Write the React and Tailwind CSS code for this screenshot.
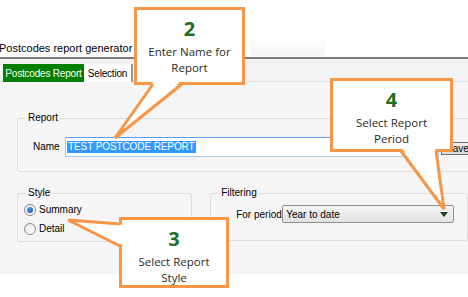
import React from 'react';

const ui = "font-['Liberation_Sans',Arial,sans-serif] text-[10px] text-black";
const callFont = "font-['Open_Sans',sans-serif]";

function Group({ label, className, children }) {
  return (
    <div className={`relative border border-[#dcdcdc] rounded-[3px] ${className}`}>
      <span className="absolute -top-[7px] left-[8px] px-[2px] bg-[#f5f5f5] leading-[12px]">{label}</span>
      {children}
    </div>
  );
}

function Radio({ checked, label }) {
  return (
    <div className="flex items-center h-[12px]">
      <span className="w-[12px] h-[12px] rounded-full border border-[#8c8c8c] bg-gradient-to-br from-[#e8e8e8] to-[#fdfdfd] flex items-center justify-center">
        {checked && <span className="w-[6px] h-[6px] rounded-full bg-gradient-to-br from-[#5fa3f0] to-[#1553b6]" />}
      </span>
      <span className="ml-[3px] leading-[12px]">{label}</span>
    </div>
  );
}

function Callout({ num, lines, className }) {
  return (
    <div className={`absolute border-[3px] border-[#f79646] bg-white flex flex-col items-center pt-[8px] ${callFont} ${className}`}>
      <span className="text-[20px] leading-[22px] font-bold text-[#1d6e1d]">{num}</span>
      <div className="mt-[4px] text-[11.5px] leading-[16px] text-[#2a2a2a] text-center">
        {lines.map((l) => <div key={l}>{l}</div>)}
      </div>
    </div>
  );
}

export default function App() {
  return (
    <div className={`relative w-[468px] h-[297px] overflow-hidden bg-white ${ui}`}>
      {/* title */}
      <div className="h-[57px] pt-[41px] flex">
        <span className="-ml-[1px] text-[11px] leading-[14px]">Postcodes report generator</span>
        <div className="ml-[118px] mt-[-1px] w-[75px] h-[16px] bg-gradient-to-b from-[#fdfdfd] to-[#f5f5f5]" />
      </div>
      <div className="h-[2px] bg-[#7b7b7b]" />

      {/* tabs */}
      <div className="h-[23px] bg-[#f2f2f2] pt-[5px] pl-[3px] flex border-b border-[#e6e6e6]">
        <div className="h-[18px] w-[81px] bg-[#008000] text-white flex items-center justify-center tracking-[-0.2px]">Postcodes Report</div>
        <div className="h-[18px] w-[49px] bg-white border-r-2 border-[#9a9a9a] flex items-center justify-center tracking-[-0.2px]">Selection</div>
      </div>

      {/* tab page */}
      <div className="h-[192px] bg-[#f5f5f5] pt-[36px] pl-[17px]">
        <Group label="Report" className="w-[470px] h-[54px]">
          <div className="pt-[18px] pl-[15px] flex items-start">
            <span className="w-[32px] leading-[20px]">Name</span>
            <div className="w-[374px] h-[20px] bg-white border border-[#a9c8ea] border-t-[#5b9ee6] flex items-center pl-[1px]">
              <span className="bg-[#3399ff] text-white leading-[12px] px-[1px] tracking-[-0.1px]">TEST POSTCODE REPORT</span>
            </div>
            <div className="ml-[2px] mt-[5px] h-[13px] w-[40px] border border-[#707070] bg-gradient-to-b from-[#f2f2f2] to-[#dcdcdc] leading-[11px] pl-[4px]">Save</div>
          </div>
        </Group>

        <div className="mt-[21px] flex">
          <Group label="Style" className="w-[178px] h-[49px]">
            <div className="pt-[10px] pl-[6px] flex flex-col gap-[7px]">
              <Radio checked label="Summary" />
              <Radio label="Detail" />
            </div>
          </Group>
          <Group label="Filtering" className="ml-[18px] w-[262px] h-[48px]">
            <div className="pt-[11px] pl-[25px] flex items-center">
              <span className="w-[46px]">For period</span>
              <div className="w-[172px] h-[18px] rounded-[2px] border border-[#8e8f8f] bg-gradient-to-b from-[#f4f4f4] to-[#e2e2e2] flex items-center pl-[3px] pr-[5px]">
                <span className="flex-1">Year to date</span>
                <svg width="8" height="5" viewBox="0 0 8 5"><polygon points="0,0 8,0 4,5" fill="#1f3f1f" /></svg>
              </div>
            </div>
          </Group>
        </div>
      </div>

      {/* callouts */}
      <Callout num="2" lines={['Enter Name for', 'Report']} className="left-[134px] top-[7px] w-[111px] h-[78px]" />
      <Callout num="4" lines={['Select Report', 'Period']} className="left-[330px] top-[78px] w-[123px] h-[74px]" />
      <Callout num="3" lines={['Select Report', 'Style']} className="left-[119px] top-[217px] w-[110px] h-[71px]" />

      <svg className="absolute inset-0 pointer-events-none" width="468" height="297">
        <g fill="white">
          <polygon points="154,81 181,81 115,138" />
          <polygon points="402,148 435,148 444,209" />
          <polygon points="123,225 123,245 68,220" />
        </g>
        <g fill="none" stroke="#f79646" strokeWidth="3" strokeLinejoin="miter">
          <polyline points="153,84 115,138 182,84" />
          <polyline points="401,151 444,209 436,151" />
          <polyline points="120,224 68,220 120,246" />
        </g>
      </svg>
    </div>
  );
}
